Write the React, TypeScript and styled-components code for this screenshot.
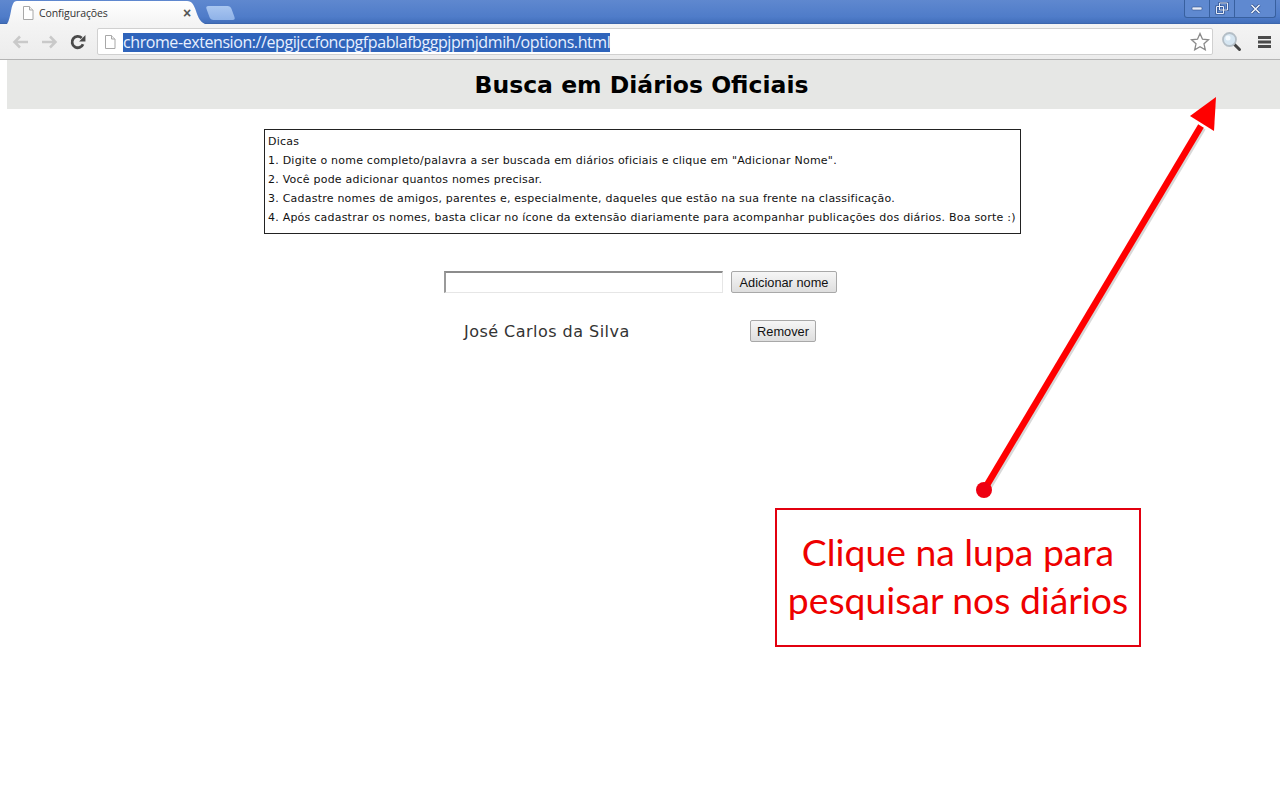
import React from "react";
import styled, { createGlobalStyle } from "styled-components";

const GlobalStyle = createGlobalStyle`
  html, body {
    margin: 0;
    padding: 0;
    background: #ffffff;
  }
  body {
    width: 1280px;
    height: 800px;
    overflow: hidden;
    font-family: "DejaVu Sans", Verdana, sans-serif;
  }
`;

const Screen = styled.div`
  position: relative;
  width: 1280px;
  height: 800px;
  background: #fff;
  overflow: hidden;
`;

const TitleBar = styled.div`
  display: flex;
  justify-content: space-between;
  height: 24px;
  padding-left: 7px;
  background: linear-gradient(#5f88cf, #4f7cc9 70%, #3f6cb8);
  box-shadow: inset 0 -1px 0 #3c66ad;
`;

const TabStrip = styled.div`
  display: flex;
  align-items: flex-end;
`;

const ActiveTab = styled.div`
  display: flex;
  align-items: center;
  width: 198px;
  height: 23px;
  margin-top: 1px;
  padding-left: 15px;
  box-sizing: border-box;
  background: linear-gradient(#ffffff, #f4f4f4);
  clip-path: path("M0 23 C2 20 3 15 4 10 C5 5 6 0 10 0 L180 0 C185 0 187 4 189 10 C191 16 193 21 198 23 Z");
`;

const TabTitle = styled.span`
  flex: none;
  width: 144px;
  margin-left: 5px;
  font-family: "Open Sans", sans-serif;
  font-size: 10.5px;
  letter-spacing: -0.1px;
  color: #333;
`;

const TabClose = styled.span`
  font-family: "Liberation Sans", sans-serif;
  font-size: 14px;
  font-weight: 700;
  color: #555;
`;

const NewTab = styled.div`
  width: 25px;
  height: 14px;
  margin: 0 0 4px 3px;
  border-radius: 3px;
  background: linear-gradient(#a9c6f0, #8fb2e8);
  transform: skewX(20deg);
`;

const WindowButtons = styled.div`
  display: flex;
  align-items: stretch;
  height: 17px;
  margin-right: 4px;
  border: 1px solid #38609f;
  border-top: none;
  border-radius: 0 0 3px 3px;
  background: #5f89d0;
`;

const WindowButton = styled.div<{ $w: number }>`
  display: flex;
  align-items: center;
  justify-content: center;
  width: ${(p) => p.$w}px;
  box-sizing: border-box;
  border-left: 1px solid #38609f;
  &:first-child {
    border-left: none;
  }
`;

const Toolbar = styled.div`
  display: flex;
  align-items: center;
  height: 36px;
  padding-left: 12px;
  box-sizing: border-box;
  background: linear-gradient(#f4f4f4, #ececec);
  border-bottom: 1px solid #b4b4b4;
`;

const NavButton = styled.div<{ $mr: number }>`
  display: flex;
  width: 17px;
  margin-right: ${(p) => p.$mr}px;
`;

const Omnibox = styled.div`
  display: flex;
  align-items: center;
  width: 1116px;
  height: 27px;
  margin-left: 10px;
  padding: 0 2px 0 6px;
  box-sizing: border-box;
  background: #fff;
  border: 1px solid #d0d0d0;
  border-radius: 2px;
`;

const UrlText = styled.span`
  margin: 2px 0 0 7px;
  height: 19px;
  line-height: 19px;
  font-family: "Open Sans", sans-serif;
  font-size: 16px;
  letter-spacing: -0.42px;
  white-space: nowrap;
  color: #e8f0ff;
  background: #2f64bb;
`;

const StarSlot = styled.div`
  display: flex;
  margin-left: auto;
`;

const ToolIcon = styled.div<{ $ml: number }>`
  display: flex;
  margin-left: ${(p) => p.$ml}px;
`;

const Page = styled.main`
  padding-left: 7px;
`;

const Banner = styled.h1`
  height: 49px;
  margin: 0;
  padding-right: 4px;
  background: #e6e7e5;
  text-align: center;
  font-size: 23.5px;
  font-weight: 700;
  line-height: 50px;
  color: #000;
`;

const Tips = styled.div`
  width: 757px;
  height: 105px;
  margin: 20px 0 0 257px;
  padding: 2px 0 0 3px;
  box-sizing: border-box;
  border: 1px solid #222;
  font-size: 11px;
  letter-spacing: 0.225px;
  line-height: 19px;
  color: #111;
  white-space: nowrap;
`;

const AddRow = styled.div`
  display: flex;
  align-items: center;
  margin: 37px 0 0 437px;
`;

const NameInput = styled.input`
  width: 279px;
  height: 22px;
  padding: 0;
  box-sizing: border-box;
  border: 1px solid #e6e6e6;
  border-top: 2px solid #8c8c8c;
  border-left: 2px solid #9a9a9a;
  background: #fff;
`;

const GreyButton = styled.button<{ $w: number }>`
  width: ${(p) => p.$w}px;
  height: 22px;
  padding: 1px 0 0;
  border: 1px solid #a8a8a8;
  border-radius: 2px;
  background: linear-gradient(#f6f6f6, #dedede);
  font-family: "Liberation Sans", Arial, sans-serif;
  font-size: 12.8px;
  color: #111;
`;

const AddButton = styled(GreyButton)`
  margin-left: 8px;
`;

const NameRow = styled.div`
  display: flex;
  align-items: center;
  margin: 27px 0 0 457px;
`;

const NameText = styled.span`
  width: 286px;
  font-size: 16px;
  letter-spacing: 0.47px;
  color: #333;
`;

const ArrowLayer = styled.svg`
  position: absolute;
  left: 0;
  top: 0;
  pointer-events: none;
`;

const Callout = styled.div`
  position: absolute;
  left: 775px;
  top: 508px;
  width: 366px;
  height: 139px;
  padding-bottom: 4px;
  box-sizing: border-box;
  display: flex;
  align-items: center;
  justify-content: center;
  border: 2px solid #e2000f;
  background: #fff;
  text-align: center;
  font-family: "Lato", sans-serif;
  font-size: 37.3px;
  line-height: 48px;
  color: #ee0000;
`;

const PageGlyph = () => (
  <svg width="12" height="14" viewBox="0 0 12 14">
    <path d="M1.5.5h6l3.5 3.5v9.500h-9.500z" fill="#fff" stroke="#a8a8a8" />
    <path d="M7.500.5v3.500h3.500" fill="#eee" stroke="#a8a8a8" />
  </svg>
);

const NavArrow = ({ flip }: { flip?: boolean }) => (
  <svg width="17" height="14" viewBox="0 0 17 14" style={flip ? { transform: "scaleX(-1)" } : undefined}>
    <path d="M8 1.500 2.500 7 8 12.500M3 7h13" fill="none" stroke="#c9c9c9" strokeWidth="2.500" />
  </svg>
);

const App: React.FC = () => {
  return (
    <Screen>
      <GlobalStyle />
      <TitleBar>
        <TabStrip>
          <ActiveTab>
            <PageGlyph />
            <TabTitle>Configurações</TabTitle>
            <TabClose>×</TabClose>
          </ActiveTab>
          <NewTab />
        </TabStrip>
        <WindowButtons>
          <WindowButton $w={24}>
            <svg width="12" height="6" viewBox="0 0 12 6">
              <rect x="1" y="1" width="10" height="3" rx="1" fill="#e8eefa" stroke="#2f4f88" strokeWidth=".6" />
            </svg>
          </WindowButton>
          <WindowButton $w={25}>
            <svg width="14" height="13" viewBox="0 0 14 13">
              <path d="M4.500 1h8v7h-8zM1.500 4.500h7v7h-7z" fill="none" stroke="#2f4f88" strokeWidth="2.200" />
              <path d="M4.500 1h8v7h-8zM1.500 4.500h7v7h-7z" fill="none" stroke="#e8eefa" strokeWidth="1" />
            </svg>
          </WindowButton>
          <WindowButton $w={41}>
            <svg width="13" height="10" viewBox="0 0 13 10">
              <path d="M2.500 1 10.500 9M10.500 1 2.500 9" stroke="#2f4f88" strokeWidth="3" />
              <path d="M2.500 1 10.500 9M10.500 1 2.500 9" stroke="#eef3fc" strokeWidth="1.600" />
            </svg>
          </WindowButton>
        </WindowButtons>
      </TitleBar>
      <Toolbar>
        <NavButton $mr={12}>
          <NavArrow />
        </NavButton>
        <NavButton $mr={12}>
          <NavArrow flip />
        </NavButton>
        <NavButton $mr={0}>
          <svg width="16" height="16" viewBox="0 0 15 15">
            <path d="M12.200 9.500A5.300 5.300 0 1 1 11 3.800" fill="none" stroke="#4a4a4a" strokeWidth="2.600" />
            <path d="M14.500 1v6h-6z" fill="#4a4a4a" />
          </svg>
        </NavButton>
        <Omnibox>
          <PageGlyph />
          <UrlText>chrome-extension://epgijccfoncpgfpablafbggpjpmjdmih/options.html</UrlText>
          <StarSlot>
            <svg width="20" height="19" viewBox="0 0 20 19">
              <path d="m10 1.500 2.500 5.700 6 .6-4.500 4 1.300 6L10 14.700l-5.300 3.100 1.300-6-4.500-4 6-.6z" fill="#fff" stroke="#8a8a8a" strokeWidth="1.300" />
            </svg>
          </StarSlot>
        </Omnibox>
        <ToolIcon $ml={8}>
          <svg width="21" height="21" viewBox="0 0 21 21">
            <path d="m12.500 12.500 6 6" stroke="#444" strokeWidth="3" strokeLinecap="round" />
            <circle cx="8.500" cy="8.500" r="6.500" fill="#d6e6f2" stroke="#b4bec6" strokeWidth="1.800" />
            <circle cx="7" cy="7" r="2.500" fill="#f4fafe" />
          </svg>
        </ToolIcon>
        <ToolIcon $ml={16}>
          <svg width="13" height="12" viewBox="0 0 13 12">
            <path d="M0 0h13v3H0zM0 4.500h13v3H0zM0 9h13v3H0z" fill="#4b4b4b" />
          </svg>
        </ToolIcon>
      </Toolbar>
      <Page>
        <Banner>Busca em Diários Oficiais</Banner>
        <Tips>
          Dicas
          <br />
          1. Digite o nome completo/palavra a ser buscada em diários oficiais e clique em "Adicionar Nome".
          <br />
          2. Você pode adicionar quantos nomes precisar.
          <br />
          3. Cadastre nomes de amigos, parentes e, especialmente, daqueles que estão na sua frente na classificação.
          <br />
          4. Após cadastrar os nomes, basta clicar no ícone da extensão diariamente para acompanhar publicações dos diários. Boa sorte :)
        </Tips>
        <AddRow>
          <NameInput />
          <AddButton $w={106}>Adicionar nome</AddButton>
        </AddRow>
        <NameRow>
          <NameText>José Carlos da Silva</NameText>
          <GreyButton $w={66}>Remover</GreyButton>
        </NameRow>
      </Page>
      <ArrowLayer width="1280" height="800" viewBox="0 0 1280 800">
        <path d="M986 492 1203 128" stroke="#d8d8d8" strokeWidth="6" />
        <path d="M984 490 1201 126" stroke="#ff0000" strokeWidth="6.500" />
        <path d="M1216 97 1214 131 1190 116z" fill="#ff0000" />
        <circle cx="984" cy="490" r="8" fill="#ee0011" />
      </ArrowLayer>
      <Callout>
        Clique na lupa para
        <br />
        pesquisar nos diários
      </Callout>
    </Screen>
  );
};

export default App;
